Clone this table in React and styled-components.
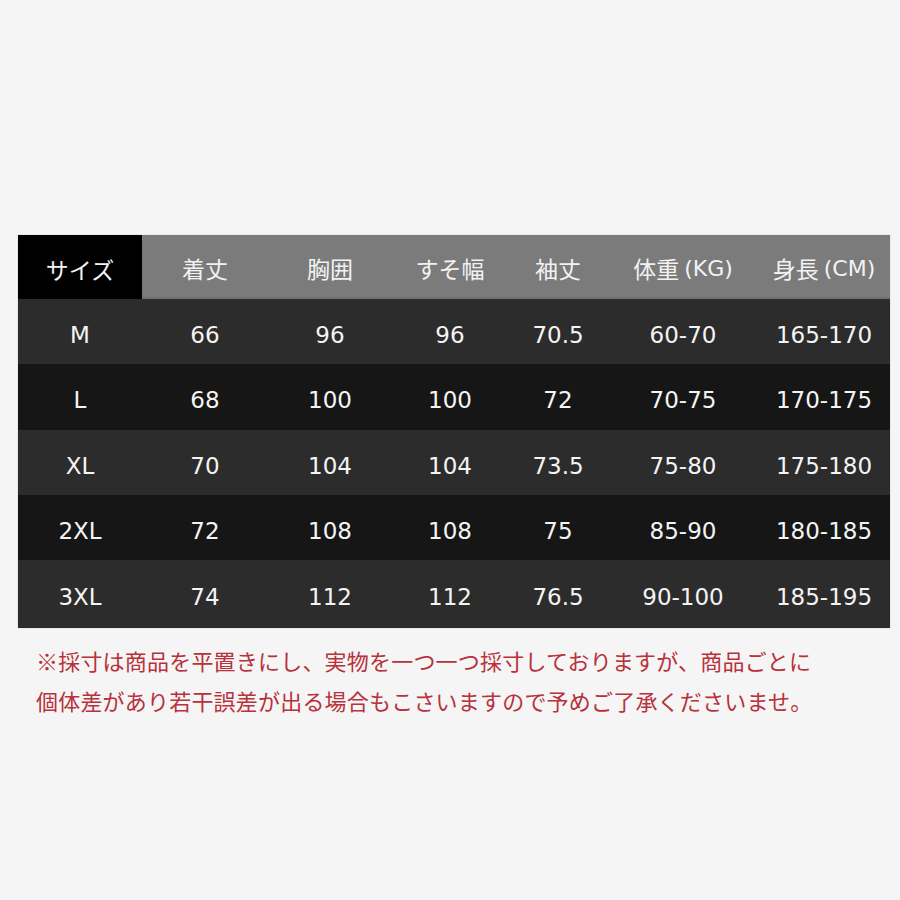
import React from "react";
import styled, { createGlobalStyle } from "styled-components";

const Global = createGlobalStyle`
  html, body { margin: 0; padding: 0; background: #f5f5f5; }
  body { width: 900px; height: 900px; overflow: hidden; }
`;

const Page = styled.div`
  width: 900px;
  height: 900px;
  box-sizing: border-box;
  padding: 235px 10px 0 18px;
  background: #f5f5f5;
`;

const Table = styled.div`
  width: 872px;
  display: grid;
  grid-template-columns: 124px 126px 124px 116px 100px 150px 132px;
  box-shadow: 0 0 1px rgba(0,0,0,0.3);
`;

const HeadCell = styled.div`
  height: 64px;
  display: flex;
  align-items: center;
  justify-content: center;
  background: ${(p) => (p.$first ? "#000" : "#7b7b7b")};
  color: #f2f2f2;
  font-family: "Noto Sans CJK JP", "DejaVu Sans", sans-serif;
  font-size: 23px;
  padding-top: 4px;
  box-sizing: border-box;
  border-bottom: ${(p) => (p.$first ? "none" : "2px solid #6e6e6e")};
  white-space: nowrap;
`;

const Latin = styled.span`
  font-family: "DejaVu Sans", sans-serif;
  font-size: 22px;
  margin-left: 5px;
`;

const Cell = styled.div`
  height: ${(p) => p.$h}px;
  display: flex;
  align-items: center;
  justify-content: center;
  box-sizing: border-box;
  padding-top: 6px;
  background: ${(p) => (p.$odd ? "#2c2c2c" : "#161616")};
  color: #f4f4f4;
  font-family: "DejaVu Sans", sans-serif;
  font-size: 23px;
  white-space: nowrap;
`;

const Note = styled.div`
  margin-top: 12px;
  padding-left: 18px;
  color: #b8313b;
  font-family: "Noto Sans CJK JP", sans-serif;
  font-size: 22px;
  line-height: 40px;
  letter-spacing: 0.2px;
`;

const headers = [
  ["サイズ"],
  ["着丈"],
  ["胸囲"],
  ["すそ幅"],
  ["袖丈"],
  ["体重", "(KG)"],
  ["身長", "(CM)"],
];

const rows = [
  ["M", "66", "96", "96", "70.5", "60-70", "165-170"],
  ["L", "68", "100", "100", "72", "70-75", "170-175"],
  ["XL", "70", "104", "104", "73.5", "75-80", "175-180"],
  ["2XL", "72", "108", "108", "75", "85-90", "180-185"],
  ["3XL", "74", "112", "112", "76.5", "90-100", "185-195"],
];

const heights = [65, 66, 65, 65, 68];

export default function App() {
  return (
    <Page>
      <Global />
      <Table>
        {headers.map(([jp, lat], i) => (
          <HeadCell key={i} $first={i === 0}>
            {jp}
            {lat && <Latin>{lat}</Latin>}
          </HeadCell>
        ))}
        {rows.map((r, ri) =>
          r.map((v, ci) => (
            <Cell key={ri + "-" + ci} $odd={ri % 2 === 0} $h={heights[ri]}>
              {v}
            </Cell>
          ))
        )}
      </Table>
      <Note>
        ※採寸は商品を平置きにし、実物を一つ一つ採寸しておりますが、商品ごとに
        <br />
        個体差があり若干誤差が出る場合もこさいますので予めご了承くださいませ。
      </Note>
    </Page>
  );
}
